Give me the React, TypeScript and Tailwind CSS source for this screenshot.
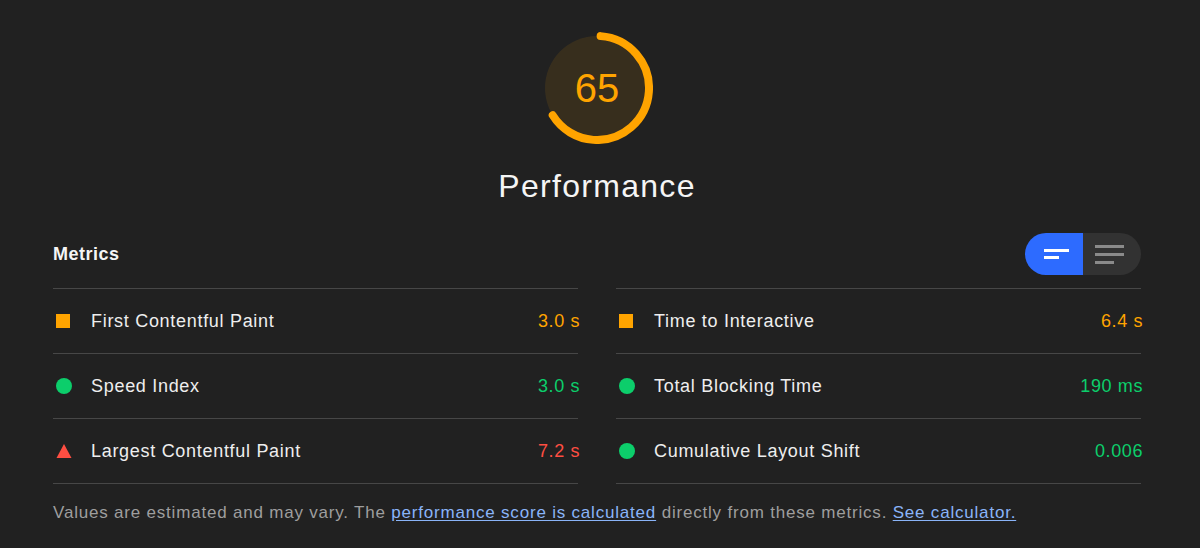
import React from "react";

type Metric = { label: string; value: string; kind: "avg" | "pass" | "fail" };

const LEFT: Metric[] = [
  { label: "First Contentful Paint", value: "3.0 s", kind: "avg" },
  { label: "Speed Index", value: "3.0 s", kind: "pass" },
  { label: "Largest Contentful Paint", value: "7.2 s", kind: "fail" },
];

const RIGHT: Metric[] = [
  { label: "Time to Interactive", value: "6.4 s", kind: "avg" },
  { label: "Total Blocking Time", value: "190 ms", kind: "pass" },
  { label: "Cumulative Layout Shift", value: "0.006", kind: "pass" },
];

const valueColor = {
  avg: "text-[#ffa400]",
  pass: "text-[#0cce6b]",
  fail: "text-[#ff4e42]",
};

function Icon({ kind }: { kind: Metric["kind"] }) {
  if (kind === "avg") return <span className="block h-[14px] w-[14px] bg-[#ffa400]" />;
  if (kind === "pass") return <span className="block h-[16px] w-[16px] rounded-full bg-[#0cce6b]" />;
  return (
    <svg width="16" height="16" viewBox="0 0 16 16" className="block">
      <polygon points="8,1 15.5,15 0.5,15" fill="#ff4e42" />
    </svg>
  );
}

function Row({ m }: { m: Metric }) {
  return (
    <div className="flex h-[65px] items-center border-t border-[#474747]">
      <div className="flex w-[38px] justify-start pl-[3px]">
        <Icon kind={m.kind} />
      </div>
      <div className="flex-1 text-[18px] tracking-[0.7px] text-[#eeeeee]">{m.label}</div>
      <div className={`-mr-[2px] text-[18px] tracking-[0.6px] ${valueColor[m.kind]}`}>{m.value}</div>
    </div>
  );
}

function Gauge({ score }: { score: number }) {
  const r = 52;
  const c = 2 * Math.PI * r;
  return (
    <div className="relative h-[112px] w-[112px]">
      <svg width="112" height="112" viewBox="0 0 112 112" className="block">
        <circle cx="56" cy="56" r={r} fill="rgba(255,164,0,0.1)" stroke="none" />
        <circle
          cx="56"
          cy="56"
          r={r}
          fill="none"
          stroke="#ffa400"
          strokeWidth="8"
          strokeLinecap="round"
          strokeDasharray={`${(score / 100) * c} ${c}`}
          transform="rotate(-86 56 56)"
        />
      </svg>
      <div className="absolute inset-0 flex items-center justify-center text-[40px] text-[#ffa400]">
        {score}
      </div>
    </div>
  );
}

export default function App() {
  return (
    <div className="min-h-screen bg-[#212121] font-['Liberation_Sans',Arial,sans-serif]">
      <div className="ml-[53px] w-[1088px] pt-[32px]">
        <div className="flex flex-col items-center">
          <Gauge score={65} />
          <div className="mt-[22px] text-[32px] leading-[40px] tracking-[1.3px] text-[#f5f5f5]">Performance</div>
        </div>

        <div className="mt-[26px] flex h-[44px] items-center justify-between">
          <div className="text-[18px] font-bold tracking-[0.5px] text-[#f5f5f5]">Metrics</div>
          <div className="flex h-[42px] w-[116px] overflow-hidden rounded-full">
            <div className="flex w-[58px] flex-col justify-center gap-[4px] bg-[#2d6bff] pl-[19px]">
              <span className="block h-[3px] w-[25px] bg-white" />
              <span className="block h-[3px] w-[15px] bg-white" />
            </div>
            <div className="flex flex-1 flex-col justify-center gap-[5px] bg-[#323232] pl-[12px]">
              <span className="block h-[3px] w-[29px] bg-[#8a8a8a]" />
              <span className="block h-[3px] w-[29px] bg-[#8a8a8a]" />
              <span className="block h-[3px] w-[19px] bg-[#8a8a8a]" />
            </div>
          </div>
        </div>

        <div className="mt-[12px] grid grid-cols-2 gap-x-[38px]">
          <div className="border-b border-[#474747]">
            {LEFT.map((m) => (
              <Row key={m.label} m={m} />
            ))}
          </div>
          <div className="border-b border-[#474747]">
            {RIGHT.map((m) => (
              <Row key={m.label} m={m} />
            ))}
          </div>
        </div>

        <div className="mt-[16px] text-[17px] tracking-[0.8px] text-[#9e9e9e]">
          Values are estimated and may vary. The{" "}
          <span className="text-[#8ab4f8] underline underline-offset-2">performance score is calculated</span> directly
          from these metrics.{" "}
          <span className="text-[#8ab4f8] underline underline-offset-2">See calculator.</span>
        </div>
      </div>
    </div>
  );
}
